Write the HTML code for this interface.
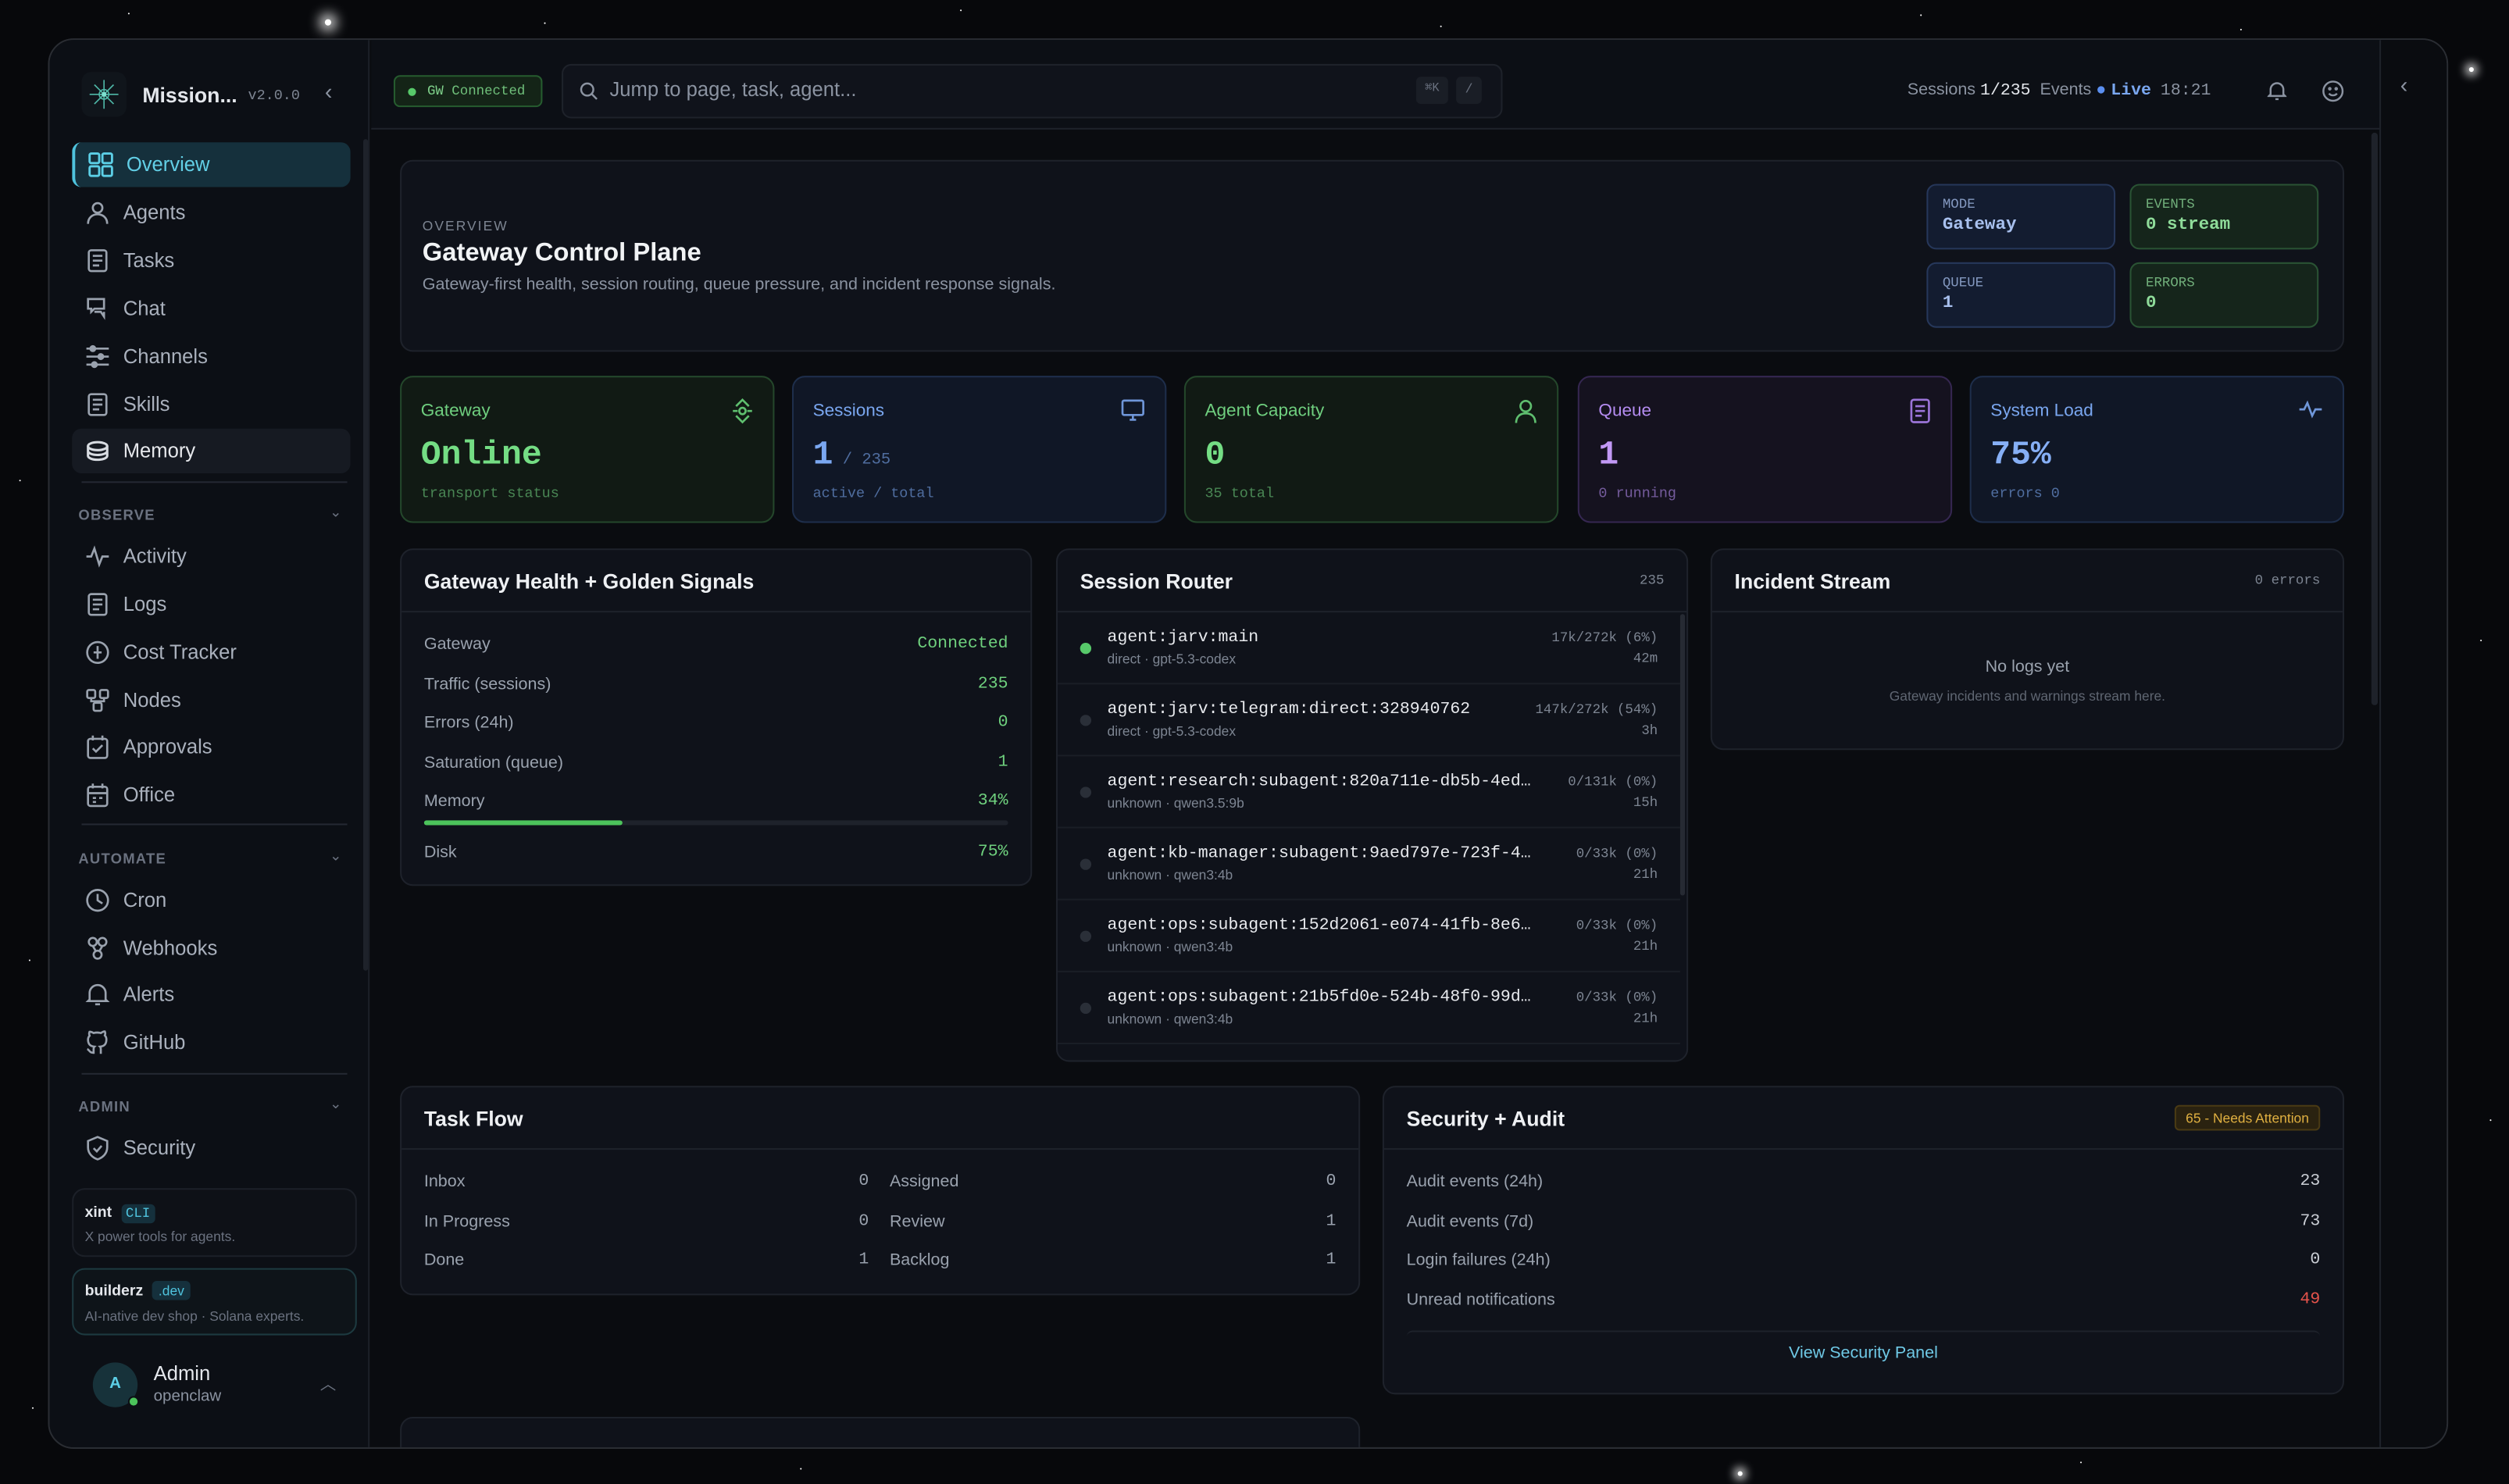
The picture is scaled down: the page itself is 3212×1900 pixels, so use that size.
<!DOCTYPE html>
<html><head><meta charset="utf-8"><style>
*{box-sizing:border-box;margin:0;padding:0}
html,body{width:3212px;height:1900px;overflow:hidden;background:#050608}
#s{position:absolute;left:0;top:0;width:1568px;height:928px;transform:scale(2.04847,2.04741);transform-origin:0 0;font-family:"Liberation Sans",sans-serif;color:#e4e7ec;background:#07080b}
.a{position:absolute}
.mono{font-family:"Liberation Mono",monospace}
.star{position:absolute;width:1px;height:1px;background:#fff;border-radius:50%}
#win{position:absolute;left:30px;top:24px;width:1500px;height:882px;border-radius:16px;background:#0a0c10;border:1px solid #2a2d33;overflow:hidden}
.nav{position:absolute;left:14px;width:174px;height:28px;border-radius:6px;font-size:12.5px;color:#aab1bd;line-height:28px;padding-left:32px}
.nav svg{position:absolute;left:8px;top:6px}
.sec{position:absolute;left:18px;font-size:9px;letter-spacing:.6px;color:#6b7280;font-weight:bold}
.card{position:absolute;background:#0f121a;border:1px solid #1e222b;border-radius:8px}
.ch{position:absolute;left:14px;top:12px;font-size:13px;font-weight:bold;color:#eef0f3}
.row{position:absolute;left:14px;right:14px;font-size:10.5px;color:#9aa2ae}
.row span{position:absolute;right:0;font-family:"Liberation Mono",monospace;color:#6fd17e}
.stat{position:absolute;top:210px;width:234px;height:92px;border-radius:8px;border:1px solid}
.stat .l{position:absolute;left:12px;top:15px;font-size:11px}
.stat .v{position:absolute;left:12px;top:38px;font-size:21px;font-weight:bold;font-family:"Liberation Mono",monospace}
.stat .u{position:absolute;left:12px;top:68px;font-size:9px;font-family:"Liberation Mono",monospace;opacity:.6}
.stat svg{position:absolute;right:12px;top:13px}
.mini{position:absolute;width:118px;height:41px;border-radius:6px;border:1px solid;padding:7px 9px;font-family:"Liberation Mono",monospace}
.mini b{display:block;font-size:8.5px;font-weight:normal;opacity:.75}
.mini i{display:block;font-style:normal;font-size:11px;margin-top:2px;font-weight:bold}
.sr{position:absolute;left:0;right:4px;height:45px;border-bottom:1px solid #1a1e26}
.sr .d{position:absolute;left:14px;top:19px;width:7px;height:7px;border-radius:50%;background:#2a2f38}
.sr .n{position:absolute;left:31px;top:10px;font-family:"Liberation Mono",monospace;font-size:10.5px;color:#e8eaee;white-space:nowrap;width:272px;overflow:hidden;text-overflow:ellipsis}
.sr .m{position:absolute;left:31px;top:24px;font-size:8.5px;color:#7d8592}
.sr .r{position:absolute;right:14px;top:10px;font-family:"Liberation Mono",monospace;font-size:8.5px;color:#7d8592;text-align:right;line-height:13px}
</style></head><body><div id="s">
<div class="star" style="left:203px;top:12px;width:4px;height:4px;box-shadow:0 0 8px 3px #fff"></div>
<div class="star" style="left:1543px;top:42px;width:3px;height:3px;box-shadow:0 0 6px 2px #fff"></div>
<div class="star" style="left:1086px;top:920px;width:3px;height:3px;box-shadow:0 0 6px 2px #fff"></div>
<div class="star" style="left:80px;top:8px"></div><div class="star" style="left:340px;top:14px"></div><div class="star" style="left:600px;top:6px"></div><div class="star" style="left:900px;top:16px"></div><div class="star" style="left:1200px;top:9px"></div><div class="star" style="left:1400px;top:18px"></div><div class="star" style="left:12px;top:300px"></div><div class="star" style="left:18px;top:600px"></div><div class="star" style="left:1550px;top:400px"></div><div class="star" style="left:1556px;top:700px"></div><div class="star" style="left:500px;top:918px"></div><div class="star" style="left:1300px;top:914px"></div><div class="star" style="left:20px;top:880px"></div>
<div id="win">
<div class="a" style="left:0;top:0;width:200px;height:882px;background:#0c0f15;border-right:1px solid #1c2028"></div>
<div class="a" style="left:20px;top:20px;width:28px;height:28px;border-radius:6px;background:#10151b"></div>
<svg class="a" style="left:23px;top:23px" width="22" height="22" viewBox="0 0 22 22"><g stroke="#4fb8a8" stroke-width=".8" fill="none"><circle cx="11" cy="11" r="3"/><path d="M11 2v18M2 11h18M5 5l12 12M17 5L5 17"/></g><circle cx="11" cy="11" r="1.5" fill="#7de0d0"/></svg>
<div class="a" style="left:58px;top:27px;font-size:13px;font-weight:bold">Mission...</div>
<div class="a mono" style="left:124px;top:30px;font-size:9px;color:#7d8592">v2.0.0</div>
<div class="a" style="left:172px;top:24px;font-size:14px;color:#8b93a1">‹</div>
<div class="nav" style="top:64px;background:#15303c;color:#62cfe6;border-left:2px solid #4fc3dd"><svg width="16" height="16" viewBox="0 0 16 16" fill="none" stroke="#5ccfe6" stroke-width="1.4"><rect x="1" y="1" width="6" height="6" rx="1"/><rect x="9" y="1" width="6" height="6" rx="1"/><rect x="1" y="9" width="6" height="6" rx="1"/><rect x="9" y="9" width="6" height="6" rx="1"/></svg>Overview</div>
<div class="nav" style="top:94px"><svg width="16" height="16" viewBox="0 0 16 16" fill="none" stroke="#9aa2ae" stroke-width="1.3"><circle cx="8" cy="5" r="3"/><path d="M2 15c0-4 3-6 6-6s6 2 6 6"/></svg>Agents</div>
<div class="nav" style="top:124px"><svg width="16" height="16" viewBox="0 0 16 16" fill="none" stroke="#9aa2ae" stroke-width="1.3"><rect x="2.5" y="1.5" width="11" height="13" rx="1.5"/><path d="M5 5h6M5 8h6M5 11h4"/></svg>Tasks</div>
<div class="nav" style="top:154px"><svg width="16" height="16" viewBox="0 0 16 16" fill="none" stroke="#9aa2ae" stroke-width="1.3"><path d="M2 2h10v6H6l-2 2V8H2z"/><path d="M6 10h4l2 3v-3"/></svg>Chat</div>
<div class="nav" style="top:184px"><svg width="16" height="16" viewBox="0 0 16 16" fill="none" stroke="#9aa2ae" stroke-width="1.3"><path d="M1 3h14M1 8h14M1 13h14"/><circle cx="5" cy="3" r="1.5" fill="#9aa2ae"/><circle cx="10" cy="8" r="1.5" fill="#9aa2ae"/><circle cx="6" cy="13" r="1.5" fill="#9aa2ae"/></svg>Channels</div>
<div class="nav" style="top:214px"><svg width="16" height="16" viewBox="0 0 16 16" fill="none" stroke="#9aa2ae" stroke-width="1.3"><rect x="2.5" y="1.5" width="11" height="13" rx="1.5"/><path d="M5 5h6M5 8h6M5 11h4"/></svg>Skills</div>
<div class="nav" style="top:243px;background:#161a22;color:#e6e8ec"><svg width="16" height="16" viewBox="0 0 16 16" fill="none" stroke="#d8dce2" stroke-width="1.5"><ellipse cx="8" cy="5" rx="6" ry="2.5"/><path d="M2 5v6c0 1.4 2.7 2.5 6 2.5s6-1.1 6-2.5V5M2 8c0 1.4 2.7 2.5 6 2.5S14 9.4 14 8"/></svg>Memory</div>
<div class="a" style="left:20px;top:276px;width:166px;height:1px;background:#242832"></div>
<div class="sec" style="top:292px">OBSERVE</div><div class="a" style="left:175px;top:290px;font-size:9px;color:#6b7280">⌄</div>
<div class="nav" style="top:309px"><svg width="16" height="16" viewBox="0 0 16 16" fill="none" stroke="#9aa2ae" stroke-width="1.3"><path d="M1 8h3l2-5 3 10 2-5h4"/></svg>Activity</div>
<div class="nav" style="top:339px"><svg width="16" height="16" viewBox="0 0 16 16" fill="none" stroke="#9aa2ae" stroke-width="1.3"><rect x="2.5" y="1.5" width="11" height="13" rx="1.5"/><path d="M5 5h6M5 8h6M5 11h4"/></svg>Logs</div>
<div class="nav" style="top:369px"><svg width="16" height="16" viewBox="0 0 16 16" fill="none" stroke="#9aa2ae" stroke-width="1.3"><circle cx="8" cy="8" r="6.5"/><path d="M8 4v8M5.5 8h5"/></svg>Cost Tracker</div>
<div class="nav" style="top:399px"><svg width="16" height="16" viewBox="0 0 16 16" fill="none" stroke="#9aa2ae" stroke-width="1.3"><rect x="1.5" y="1.5" width="5" height="5" rx="1"/><rect x="9.5" y="1.5" width="5" height="5" rx="1"/><rect x="5.5" y="9.5" width="5" height="5" rx="1"/><path d="M4 6.5v2h8v-2M8 8.5v1"/></svg>Nodes</div>
<div class="nav" style="top:428px"><svg width="16" height="16" viewBox="0 0 16 16" fill="none" stroke="#9aa2ae" stroke-width="1.3"><rect x="2" y="3" width="12" height="12" rx="1.5"/><path d="M5 1v3M11 1v3M5 9l2 2 4-4"/></svg>Approvals</div>
<div class="nav" style="top:458px"><svg width="16" height="16" viewBox="0 0 16 16" fill="none" stroke="#9aa2ae" stroke-width="1.3"><rect x="2" y="3" width="12" height="12" rx="1.5"/><path d="M2 7h12M5 1v3M11 1v3M5 10h2M9 10h2M5 12.5h2"/></svg>Office</div>
<div class="a" style="left:20px;top:490px;width:166px;height:1px;background:#242832"></div>
<div class="sec" style="top:507px">AUTOMATE</div><div class="a" style="left:175px;top:505px;font-size:9px;color:#6b7280">⌄</div>
<div class="nav" style="top:524px"><svg width="16" height="16" viewBox="0 0 16 16" fill="none" stroke="#9aa2ae" stroke-width="1.3"><circle cx="8" cy="8" r="6.5"/><path d="M8 4v4l3 2"/></svg>Cron</div>
<div class="nav" style="top:554px"><svg width="16" height="16" viewBox="0 0 16 16" fill="none" stroke="#9aa2ae" stroke-width="1.3"><circle cx="5" cy="4" r="2.5"/><circle cx="11" cy="4" r="2.5"/><circle cx="8" cy="12" r="2.5"/><path d="M5 6.5L7 10M11 6.5L9 10"/></svg>Webhooks</div>
<div class="nav" style="top:583px"><svg width="16" height="16" viewBox="0 0 16 16" fill="none" stroke="#9aa2ae" stroke-width="1.3"><path d="M3 11V7a5 5 0 0110 0v4l1 1H2zM6.5 14h3"/></svg>Alerts</div>
<div class="nav" style="top:613px"><svg width="16" height="16" viewBox="0 0 16 16" fill="none" stroke="#9aa2ae" stroke-width="1.3"><path d="M6 14c-3 1-3-1.5-4.5-2M10 15v-2.5c0-1 .1-1.4-.5-2 2-.2 4-1 4-4.5a3.5 3.5 0 00-1-2.5 3 3 0 000-2.5s-.8-.2-2.5 1a8.5 8.5 0 00-4.5 0C3.8 1 3 1.2 3 1.2a3 3 0 000 2.5A3.5 3.5 0 002 6c0 3.5 2 4.3 4 4.5-.4.4-.5 1-.5 1.5V15"/></svg>GitHub</div>
<div class="a" style="left:20px;top:646px;width:166px;height:1px;background:#242832"></div>
<div class="sec" style="top:662px">ADMIN</div><div class="a" style="left:175px;top:660px;font-size:9px;color:#6b7280">⌄</div>
<div class="nav" style="top:679px"><svg width="16" height="16" viewBox="0 0 16 16" fill="none" stroke="#9aa2ae" stroke-width="1.3"><path d="M8 1l6 2.5v4c0 4-3 6.5-6 7.5-3-1-6-3.5-6-7.5v-4z"/><path d="M5.5 8l2 2 3-3.5"/></svg>Security</div>
<div class="a" style="left:14px;top:718px;width:178px;height:43px;border-radius:8px;background:#0e1117;border:1px solid #1c2028"></div>
<div class="a" style="left:22px;top:728px;font-size:9.5px;font-weight:bold">xint <span class="mono" style="font-weight:normal;color:#4fc3dd;background:#15303c;padding:1px 3px;border-radius:3px;margin-left:3px;font-size:8.5px">CLI</span></div>
<div class="a" style="left:22px;top:743px;font-size:8.5px;color:#6b7280">X power tools for agents.</div>
<div class="a" style="left:14px;top:768px;width:178px;height:42px;border-radius:8px;background:#0e1419;border:1px solid #1d3a40"></div>
<div class="a" style="left:22px;top:777px;font-size:9.5px;font-weight:bold">builderz <span style="font-weight:normal;color:#4fc3dd;background:#15303c;padding:1px 4px;border-radius:3px;margin-left:3px;font-size:8.5px">.dev</span></div>
<div class="a" style="left:22px;top:793px;font-size:8.5px;color:#6b7280">AI-native dev shop · Solana experts.</div>
<div class="a" style="left:27px;top:827px;width:28px;height:28px;border-radius:50%;background:#17323a;color:#5ccfe6;font-size:10px;font-weight:bold;text-align:center;line-height:28px">A</div>
<div class="a" style="left:49px;top:848px;width:7px;height:7px;border-radius:50%;background:#4cc35b;border:1px solid #0c0f15"></div>
<div class="a" style="left:65px;top:827px;font-size:12.5px">Admin</div>
<div class="a" style="left:65px;top:843px;font-size:10px;color:#8b93a1">openclaw</div>
<div class="a" style="left:169px;top:832px;font-size:10px;color:#6b7280">︿</div>
<div class="a" style="left:196px;top:62px;width:3px;height:520px;border-radius:2px;background:#1e222a"></div>
<div class="a" style="left:201px;top:0;width:1299px;height:56px;background:#0c0f15;border-bottom:1px solid #1e222a"></div>
<div class="a mono" style="left:215px;top:22px;width:93px;height:20px;border-radius:4px;background:#142417;border:1px solid #265c2f;font-size:8.5px;color:#7fd18b;line-height:18px;padding-left:20px"><span style="position:absolute;left:8px;top:7px;width:5px;height:5px;border-radius:50%;background:#57c96a"></span>GW <span style="color:#6fbf7a">Connected</span></div>
<div class="a" style="left:320px;top:15px;width:588px;height:34px;border-radius:6px;background:#10131b;border:1px solid #1e222a"></div>
<svg class="a" style="left:331px;top:26px" width="12" height="12" viewBox="0 0 12 12" fill="none" stroke="#8b93a1" stroke-width="1.2"><circle cx="5" cy="5" r="3.8"/><path d="M8 8l3 3"/></svg>
<div class="a" style="left:350px;top:24px;font-size:12.5px;color:#8b93a1">Jump to page, task, agent...</div>
<div class="a mono" style="left:854px;top:23px;width:20px;height:17px;border-radius:3px;background:#1a1e26;font-size:7.5px;color:#6b7280;text-align:center;line-height:17px">⌘K</div>
<div class="a mono" style="left:879px;top:23px;width:16px;height:17px;border-radius:3px;background:#1a1e26;font-size:8px;color:#6b7280;text-align:center;line-height:17px">/</div>
<div class="a" style="left:1161px;top:25px;font-size:10.5px;color:#8b93a1">Sessions <b class="mono" style="color:#e4e7ec;font-weight:normal">1/235</b> &nbsp;Events <span style="color:#5b8ff0">●</span> <b class="mono" style="color:#7aa7f0">Live</b> &nbsp;<span class="mono">18:21</span></div>
<svg class="a" style="left:1386px;top:25px" width="12" height="14" viewBox="0 0 12 14" fill="none" stroke="#8b93a1" stroke-width="1.2"><path d="M2 9V6a4 4 0 018 0v3l1 1H1zM5 12h2"/></svg>
<svg class="a" style="left:1420px;top:25px" width="14" height="14" viewBox="0 0 14 14" fill="none" stroke="#8b93a1" stroke-width="1.2"><circle cx="7" cy="7" r="6"/><path d="M4.5 8.5c1.2 1.5 3.8 1.5 5 0"/><circle cx="5" cy="5.5" r=".5"/><circle cx="9" cy="5.5" r=".5"/></svg>
<div class="a" style="left:1456px;top:0;width:44px;height:882px;border-left:1px solid #1e222a;background:#0a0c10"></div>
<div class="a" style="left:1469px;top:20px;font-size:14px;color:#8b93a1">‹</div>
<div class="a" style="left:1451px;top:58px;width:4px;height:358px;border-radius:2px;background:#1e222a"></div>
<div class="card" style="left:219px;top:75px;width:1215px;height:120px"></div>
<div class="a" style="left:233px;top:111px;font-size:8.5px;letter-spacing:1px;color:#7d8592">OVERVIEW</div>
<div class="a" style="left:233px;top:125px;font-size:16px;font-weight:bold;color:#f1f3f5">Gateway Control Plane</div>
<div class="a" style="left:233px;top:147px;font-size:10.5px;color:#8b93a1">Gateway-first health, session routing, queue pressure, and incident response signals.</div>
<div class="mini" style="left:1173px;top:90px;background:#131c30;border-color:#26375a;color:#a8c0ee"><b>MODE</b><i>Gateway</i></div>
<div class="mini" style="left:1300px;top:90px;background:#15251b;border-color:#2a5334;color:#8fdc9a"><b>EVENTS</b><i>0 stream</i></div>
<div class="mini" style="left:1173px;top:139px;background:#131c30;border-color:#26375a;color:#a8c0ee"><b>QUEUE</b><i>1</i></div>
<div class="mini" style="left:1300px;top:139px;background:#15251b;border-color:#2a5334;color:#8fdc9a"><b>ERRORS</b><i>0</i></div>
<div class="stat" style="left:219px;background:#111a14;border-color:#24472b;color:#6fcf7f"><div class="l">Gateway</div><div class="v" style="color:#74dd84">Online</div><div class="u">transport status</div><svg width="14" height="16" viewBox="0 0 14 16" fill="none" stroke="#5fbf6f" stroke-width="1.3"><path d="M3 5l4-4 4 4M3 11l4 4 4-4"/><circle cx="7" cy="8" r="2"/><path d="M1 8h3M10 8h3"/></svg></div>
<div class="stat" style="left:464px;background:#101726;border-color:#1e2e4b;color:#7aa7f0"><div class="l">Sessions</div><div class="v">1<span style="font-size:10px;font-weight:normal;opacity:.6"> / 235</span></div><div class="u">active / total</div><svg width="16" height="15" viewBox="0 0 16 15" fill="none" stroke="#6f96d8" stroke-width="1.3"><rect x="1.5" y="1.5" width="13" height="9" rx="1"/><path d="M6 13.5h4M8 10.5v3"/></svg></div>
<div class="stat" style="left:709px;background:#111a14;border-color:#24472b;color:#6fcf7f"><div class="l">Agent Capacity</div><div class="v" style="color:#74dd84">0</div><div class="u">35 total</div><svg width="15" height="16" viewBox="0 0 15 16" fill="none" stroke="#5fbf6f" stroke-width="1.3"><circle cx="7.5" cy="5" r="3.3"/><path d="M1.5 15.5c0-4 2.5-6 6-6s6 2 6 6"/></svg></div>
<div class="stat" style="left:955px;background:#15121f;border-color:#352751;color:#b48cf0"><div class="l">Queue</div><div class="v" style="color:#c299f5">1</div><div class="u">0 running</div><svg width="14" height="16" viewBox="0 0 14 16" fill="none" stroke="#9b74d8" stroke-width="1.3"><rect x="1.5" y="1" width="11" height="14" rx="1.5"/><path d="M4 5h6M4 8h6M4 11h4"/></svg></div>
<div class="stat" style="left:1200px;background:#101726;border-color:#1e2e4b;color:#7aa7f0"><div class="l">System Load</div><div class="v" style="color:#86aff5">75%</div><div class="u">errors 0</div><svg width="16" height="14" viewBox="0 0 16 14" fill="none" stroke="#6f96d8" stroke-width="1.3"><path d="M1 7h3l2-4 3 8 2-4h4"/></svg></div>
<div class="card" style="left:219px;top:318px;width:395px;height:211px">
<div class="ch">Gateway Health + Golden Signals</div>
<div class="a" style="left:0;right:0;top:38px;height:1px;background:#1e222b"></div>
<div class="row" style="top:53px">Gateway<span>Connected</span></div>
<div class="row" style="top:78px">Traffic (sessions)<span>235</span></div>
<div class="row" style="top:102px">Errors (24h)<span>0</span></div>
<div class="row" style="top:127px">Saturation (queue)<span>1</span></div>
<div class="row" style="top:151px">Memory<span>34%</span></div>
<div class="a" style="left:14px;right:14px;top:169px;height:3px;border-radius:2px;background:#1e222b"><div style="width:34%;height:3px;border-radius:2px;background:#4cc35b"></div></div>
<div class="row" style="top:183px">Disk<span>75%</span></div>
</div>
<div class="card" style="left:629px;top:318px;width:395px;height:321px;overflow:hidden">
<div class="ch">Session Router</div><div class="a mono" style="right:14px;top:14px;font-size:8.5px;color:#7d8592">235</div>
<div class="a" style="left:0;right:0;top:38px;height:1px;background:#1e222b"></div>
<div class="sr" style="top:39px"><div class="d" style="background:#57c96a"></div><div class="n">agent:jarv:main</div><div class="m">direct · gpt-5.3-codex</div><div class="r">17k/272k (6%)<br>42m</div></div>
<div class="sr" style="top:84px"><div class="d"></div><div class="n">agent:jarv:telegram:direct:328940762</div><div class="m">direct · gpt-5.3-codex</div><div class="r">147k/272k (54%)<br>3h</div></div>
<div class="sr" style="top:129px"><div class="d"></div><div class="n" style="width:265px">agent:research:subagent:820a711e-db5b-4ed8-a</div><div class="m">unknown · qwen3.5:9b</div><div class="r">0/131k (0%)<br>15h</div></div>
<div class="sr" style="top:174px"><div class="d"></div><div class="n" style="width:270px">agent:kb-manager:subagent:9aed797e-723f-4780</div><div class="m">unknown · qwen3:4b</div><div class="r">0/33k (0%)<br>21h</div></div>
<div class="sr" style="top:219px"><div class="d"></div><div class="n" style="width:270px">agent:ops:subagent:152d2061-e074-41fb-8e6e-a</div><div class="m">unknown · qwen3:4b</div><div class="r">0/33k (0%)<br>21h</div></div>
<div class="sr" style="top:264px"><div class="d"></div><div class="n" style="width:270px">agent:ops:subagent:21b5fd0e-524b-48f0-99d8-a</div><div class="m">unknown · qwen3:4b</div><div class="r">0/33k (0%)<br>21h</div></div>
<div class="a" style="right:1px;top:40px;width:3px;height:176px;border-radius:2px;background:#262a33"></div>
</div>
<div class="card" style="left:1038px;top:318px;width:396px;height:126px">
<div class="ch">Incident Stream</div><div class="a mono" style="right:14px;top:14px;font-size:8.5px;color:#7d8592">0 errors</div>
<div class="a" style="left:0;right:0;top:38px;height:1px;background:#1e222b"></div>
<div class="a" style="left:0;right:0;top:67px;text-align:center;font-size:10.5px;color:#9aa2ae">No logs yet</div>
<div class="a" style="left:0;right:0;top:86px;text-align:center;font-size:8.5px;color:#5f6672">Gateway incidents and warnings stream here.</div>
</div>
<div class="card" style="left:219px;top:654px;width:600px;height:131px">
<div class="ch">Task Flow</div>
<div class="a" style="left:0;right:0;top:38px;height:1px;background:#1e222b"></div>
<div class="row" style="top:53px;right:306px">Inbox<span style="color:#9aa2ae">0</span></div>
<div class="row" style="top:78px;right:306px">In Progress<span style="color:#9aa2ae">0</span></div>
<div class="row" style="top:102px;right:306px">Done<span style="color:#9aa2ae">1</span></div>
<div class="row" style="top:53px;left:305px">Assigned<span style="color:#9aa2ae">0</span></div>
<div class="row" style="top:78px;left:305px">Review<span style="color:#9aa2ae">1</span></div>
<div class="row" style="top:102px;left:305px">Backlog<span style="color:#9aa2ae">1</span></div>
</div>
<div class="card" style="left:833px;top:654px;width:601px;height:193px">
<div class="ch">Security + Audit</div>
<div class="a" style="right:14px;top:11px;padding:2px 6px;border-radius:3px;background:#2a2210;border:1px solid #4a3a14;color:#e0b041;font-size:8.5px">65 - Needs Attention</div>
<div class="a" style="left:0;right:0;top:38px;height:1px;background:#1e222b"></div>
<div class="row" style="top:53px">Audit events (24h)<span style="color:#c9cdd4">23</span></div>
<div class="row" style="top:78px">Audit events (7d)<span style="color:#c9cdd4">73</span></div>
<div class="row" style="top:102px">Login failures (24h)<span style="color:#c9cdd4">0</span></div>
<div class="row" style="top:127px">Unread notifications<span style="color:#e5534b">49</span></div>
<div class="a" style="left:14px;right:14px;top:152px;height:23px;border-top:1px solid #1e222b;border-radius:4px;text-align:center;font-size:10.5px;color:#6fc9e6;line-height:26px">View Security Panel</div>
</div>
<div class="card" style="left:219px;top:861px;width:600px;height:40px"></div>
</div>
</div></body></html>
